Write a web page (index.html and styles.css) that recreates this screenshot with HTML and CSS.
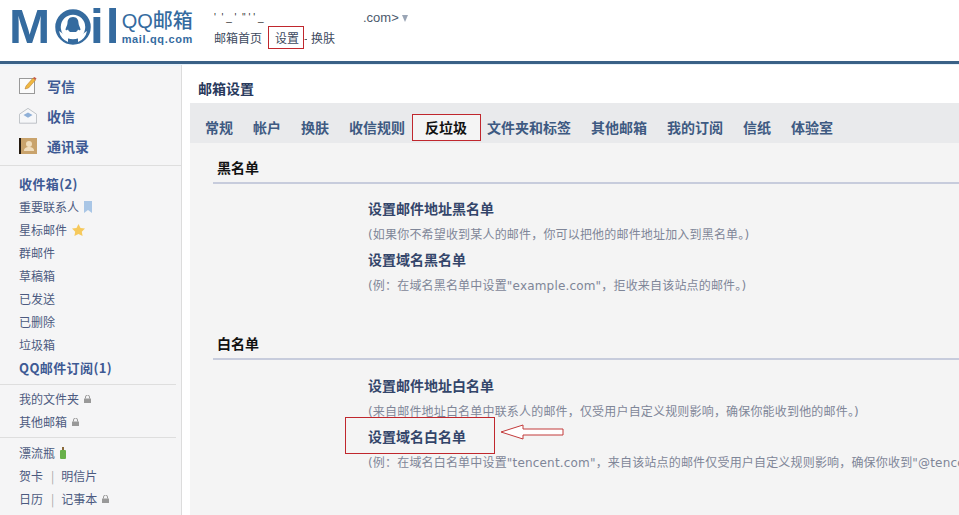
FILE: index.html
```html
<!DOCTYPE html>
<html lang="zh">
<head>
<meta charset="utf-8">
<title>QQ邮箱</title>
<link rel="stylesheet" href="styles.css">
</head>
<body>
<div class="page">
  <header class="top">
    <div class="logo">
      <span class="logo-mark">M</span>
      <svg class="logo-o" width="36" height="36" viewBox="0 0 36 36">
        <circle cx="18" cy="18" r="15" fill="none" stroke="#356b9f" stroke-width="5.5"/>
        <path d="M4 22 A15 15 0 0 0 13 33 L13 28Z M32 22 A15 15 0 0 1 23 33 L23 28Z" fill="#fff"/>
        <path d="M18 8c-4 0-5.500 3-5.500 6 0 2-2 5-2 6.500 0 1.500 2 .5 2.500 0 .5 1.500 1.500 2 2 2.500h6c.5-.5 1.500-1 2-2.500.5.500 2.500 1.500 2.500 0 0-1.500-2-4.500-2-6.500 0-3-1.500-6-5.500-6z" fill="#356b9f"/>
      </svg>
      <span class="logo-mark logo-il">il</span>
      <div class="logo-text">
        <div class="logo-name">QQ邮箱</div>
        <div class="logo-url">mail.qq.com</div>
      </div>
    </div>
    <div class="account">
      <div class="account-line"><span class="specks">' &nbsp;' _ ' &nbsp;'' ' ' _</span><span>.com&gt;</span><span class="caret"></span></div>
      <nav class="top-nav"><a>邮箱首页</a><a class="setting">设置</a><span class="dash">-</span><a>换肤</a></nav>
    </div>
  </header>
  <div class="rule"></div>
  <div class="body">
    <aside class="side">
      <ul class="tools">
        <li>
          <svg class="tool-icon" width="18" height="18" viewBox="0 0 18 18"><rect x=".5" y="1.500" width="15" height="15" fill="#fbfbfb" stroke="#999"/><path d="M6 12l1-3 7-8 2.500 2-7 8z" fill="#f0b840" stroke="#b5772a" stroke-width=".5"/><path d="M14 1l2.500 2 1-1.500L15.500 0z" fill="#c65a4a"/></svg>
          写信
        </li>
        <li>
          <svg class="tool-icon" width="18" height="18" viewBox="0 0 20 18"><path d="M.5 7L10 .5 19.500 7v10H.5z" fill="#f6f7f9" stroke="#b8bcc2"/><path d="M5 8l5-3 5 3-5 3z" fill="#8fb0d8"/></svg>
          收信
        </li>
        <li>
          <svg class="tool-icon" width="18" height="16" viewBox="0 0 18 16"><rect width="18" height="16" fill="#c9a36c"/><rect width="2" height="16" fill="#241a10"/><circle cx="10" cy="6" r="3" fill="#f0ddbd"/><path d="M5 13c0-3 2-4 5-4s5 1 5 4z" fill="#f0ddbd"/></svg>
          通讯录
        </li>
      </ul>
      <ul class="folders">
        <li class="bold">收件箱(2)</li>
        <li>重要联系人<svg class="mini" width="8" height="12" viewBox="0 0 8 12"><path d="M0 0h8v12L4 9l-4 3z" fill="#a9c6e6"/></svg></li>
        <li>星标邮件<svg class="mini" width="13" height="12" viewBox="0 0 13 12"><path d="M6.500 0l2 4 4.500.6-3.200 3.100.8 4.300-4.100-2.100L2.400 12l.8-4.300L0 4.600 4.500 4z" fill="#f6c95c"/></svg></li>
        <li>群邮件</li>
        <li>草稿箱</li>
        <li>已发送</li>
        <li>已删除</li>
        <li>垃圾箱</li>
        <li class="bold">QQ邮件订阅(1)</li>
      </ul>
      <ul class="folders extra">
        <li>我的文件夹<svg class="mini" width="7" height="8" viewBox="0 0 7 8"><path d="M1.500 3.500V2a2 2 0 0 1 4 0v1.500" fill="none" stroke="#999"/><rect y="3.500" width="7" height="4.500" fill="#999"/></svg></li>
        <li>其他邮箱<svg class="mini" width="7" height="8" viewBox="0 0 7 8"><path d="M1.500 3.500V2a2 2 0 0 1 4 0v1.500" fill="none" stroke="#999"/><rect y="3.500" width="7" height="4.500" fill="#999"/></svg></li>
      </ul>
      <ul class="folders extra last">
        <li>漂流瓶<svg class="mini" width="6" height="12" viewBox="0 0 6 12"><rect x="2" width="2" height="3" fill="#8a6a3a"/><rect y="3" width="6" height="9" rx="1" fill="#68b04a"/></svg></li>
        <li>贺卡<span class="sep">|</span>明信片</li>
        <li>日历<span class="sep">|</span>记事本<svg class="mini" width="7" height="8" viewBox="0 0 7 8"><path d="M1.500 3.500V2a2 2 0 0 1 4 0v1.500" fill="none" stroke="#999"/><rect y="3.500" width="7" height="4.500" fill="#999"/></svg></li>
      </ul>
    </aside>
    <main class="main">
      <h1 class="title">邮箱设置</h1>
      <div class="panel">
        <div class="tabs">
          <a>常规</a><a>帐户</a><a>换肤</a><a>收信规则</a><a class="active">反垃圾</a><a>文件夹和标签</a><a>其他邮箱</a><a>我的订阅</a><a>信纸</a><a>体验室</a>
        </div>
        <section class="group">
          <h2>黑名单</h2>
          <div class="rows">
            <h3>设置邮件地址黑名单</h3>
            <p>(如果你不希望收到某人的邮件，你可以把他的邮件地址加入到黑名单。)</p>
            <h3>设置域名黑名单</h3>
            <p>(例：在域名黑名单中设置"example.com"，拒收来自该站点的邮件。)</p>
          </div>
        </section>
        <section class="group white">
          <h2>白名单</h2>
          <div class="rows">
            <h3>设置邮件地址白名单</h3>
            <p>(来自邮件地址白名单中联系人的邮件，仅受用户自定义规则影响，确保你能收到他的邮件。)</p>
            <h3 class="marked">设置域名白名单
              <span class="mark-box"></span>
              <svg class="arrow" width="66" height="16" viewBox="0 0 66 16"><path d="M1 8L23 1v4h40v6H23v4z" fill="#fff" stroke="#c23a3a"/></svg>
            </h3>
            <p>(例：在域名白名单中设置"tencent.com"，来自该站点的邮件仅受用户自定义规则影响，确保你收到"@tencent.com"的邮件。)</p>
          </div>
        </section>
      </div>
    </main>
  </div>
</div>
</body>
</html>
```

FILE: styles.css
```css
html, body { margin: 0; padding: 0; height: 515px; overflow: hidden; background: #fff; }
body { font-family: "Noto Sans CJK SC", "Liberation Sans", sans-serif; font-size: 12px; color: #4c5a80; }
ul { list-style: none; margin: 0; padding: 0; }
h1, h2, h3, p { margin: 0; }
.page { width: 959px; height: 515px; overflow: hidden; display: flex; flex-direction: column; }

.top { height: 61px; display: flex; flex: none; }
.logo { display: flex; align-items: flex-start; padding: 9px 0 0 9px; width: 214px; box-sizing: border-box; }
.logo-mark { font-family: "Liberation Sans", sans-serif; font-weight: 700; font-size: 48px; line-height: 36px; height: 36px; color: #356b9f; transform: scaleX(1.03); transform-origin: left; }
.logo-o { margin-left: 6px; flex: none; }
.logo-il { margin-left: -1px; letter-spacing: 2px; }
.logo-text { margin-left: 1px; color: #356b9f; }
.logo-name { font-size: 20px; font-weight: 500; line-height: 24px; font-family: "Liberation Sans", "Noto Sans CJK SC", sans-serif; }
.logo-url { font-family: "Liberation Sans", sans-serif; font-weight: 700; font-size: 11px; line-height: 12px; letter-spacing: .65px; }
.account { padding-top: 9px; }
.account-line { height: 18px; line-height: 18px; font-family: "Liberation Sans", sans-serif; font-size: 13px; color: #4c5a6c; display: flex; align-items: center; }
.specks { width: 149px; white-space: pre; font-size: 10px; color: #333; overflow: hidden; }
.caret { width: 0; height: 0; margin-left: 3px; border: 3.500px solid transparent; border-top: 7px solid #9aa5b5; border-bottom: 0; }
.top-nav { display: flex; align-items: center; height: 20px; color: #3d4a5e; }
.top-nav a { display: block; }
.top-nav a.setting { margin-left: 13px; position: relative; }
.top-nav a.setting::after { content: ""; position: absolute; left: -7px; top: -3px; width: 34px; height: 21px; border: 1px solid #c0272d; }
.dash { margin: 0 4px 0 5px; width: 3px; overflow: hidden; }

.rule { height: 3px; flex: none; background: #3a6187; border-bottom: 1px solid #e8f2fa; }

.body { flex: 1; display: flex; min-height: 0; }
.side { width: 181px; flex: none; background: #f5f5f6; border-right: 1px solid #dcdcdc; box-shadow: inset 0 1px 0 #eaf3fb; }
.tools { height: 101px; box-sizing: border-box; padding-top: 6px; border-bottom: 1px solid #dedede; }
.tools li { height: 30px; display: flex; align-items: center; padding-left: 19px; font-size: 14px; font-weight: 700; color: #3e5a94; }
.tool-icon { margin-right: 10px; flex: none; }
.folders { padding: 6px 0 5px; }
.folders li { height: 23px; line-height: 23px; padding-left: 19px; color: #4c5a80; display: flex; align-items: center; }
.folders li.bold { font-weight: 700; color: #3e5a94; font-size: 13px; letter-spacing: .4px; }
.folders.extra { margin-right: 5px; border-top: 1px solid #dedede; padding: 2px 0 4px; }
.folders.extra.last { padding-top: 3px; }
.mini { margin-left: 5px; flex: none; }
.sep { color: #a8a8a8; margin: 0 7px 0 8px; }

.main { flex: 1; min-width: 0; padding-left: 8px; display: flex; flex-direction: column; }
.title { height: 38px; padding: 14px 0 0 8px; box-sizing: border-box; font-size: 14px; font-weight: 700; line-height: 18px; color: #28395c; }
.panel { flex: 1; background: #f4f4f4; }
.tabs { height: 40px; box-sizing: border-box; padding: 7px 0 0 15px; background: #e9eaec; display: flex; align-items: center; gap: 20px; white-space: nowrap; }
.tabs a { font-size: 14px; font-weight: 700; color: #3e5a82; position: relative; }
.tabs a.active { color: #111; z-index: 1; isolation: isolate; }
.tabs a.active::before { content: ""; position: absolute; z-index: -1; left: -13px; top: -3px; width: 67px; height: 25px; border: 1px solid #c0272d; background: #f4f4f4; }

.group { margin-left: 23px; }
.group h2 { font-size: 14px; font-weight: 700; color: #111; height: 41px; box-sizing: border-box; padding: 15px 0 0 4px; line-height: 18px; border-bottom: 2px solid #c7ccdc; }
.rows { padding: 12px 0 0 155px; white-space: nowrap; }
.rows h3 { font-size: 14px; font-weight: 700; color: #33456a; line-height: 25px; height: 25px; position: relative; }
.rows p { font-family: "DejaVu Sans", "Noto Sans CJK SC", sans-serif; font-size: 12px; letter-spacing: .18px; color: #7f8698; line-height: 26px; height: 26px; box-sizing: border-box; padding-top: 1px; }
.group.white { margin-top: 21px; }
.group.white .rows { padding-top: 13px; }
.mark-box { position: absolute; left: -23px; top: -7px; width: 148px; height: 35px; border: 1px solid #c0272d; }
.arrow { position: absolute; left: 132px; top: 0; }
```
